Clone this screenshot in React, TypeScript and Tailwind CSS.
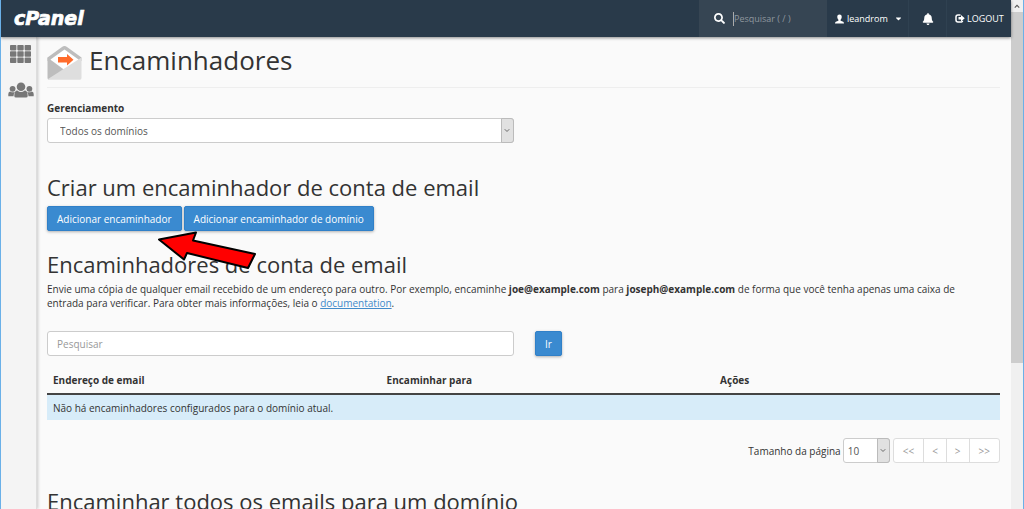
import type { ComponentProps, ReactNode } from "react";
import { FaBell, FaCaretDown, FaSearch } from "react-icons/fa";

function Envelope() {
  return (
    <svg viewBox="0 0 35 35" className="size-[35px] shrink-0" aria-hidden="true">
      <path d="M0.5 12.5 L15 2 Q17.5 -0.2 20 2 L34.5 12.5 V16 H0.5 Z" fill="#bdbdbd" />
      <path d="M3.5 14.5 L17.5 4.5 L31.5 14.5 V24 H3.5 Z" fill="#fff" />
      <path d="M0.5 12.5 L17.5 25 L2 34.5 Q0.5 34.5 0.5 33 Z" fill="#bdbdbd" />
      <path d="M34.5 12.5 L1 34 Q1.5 34.7 3 34.7 H33 Q34.5 34.7 34.5 33 Z" fill="#dedede" />
      <path d="M11 12 H20 V9 L26.5 14.7 L20 20.5 V17.5 H11 Z" fill="#ff6c2c" />
    </svg>
  );
}

function GridIcon() {
  return (
    <svg viewBox="0 0 21 18" className="h-[18px] w-[21px]" fill="#777" aria-hidden="true">
      {[0, 6.3, 12.6].map((y) =>
        [0, 7.3, 14.6].map((x) => <rect key={`${x}-${y}`} x={x} y={y} width="6.4" height="5.4" rx="0.8" />),
      )}
    </svg>
  );
}

function UsersIcon() {
  return (
    <svg viewBox="0 0 26 16" className="h-4 w-[26px]" fill="#777" aria-hidden="true">
      <circle cx="4.6" cy="6.8" r="2.9" />
      <circle cx="21.4" cy="6.8" r="2.9" />
      <path d="M0.3 14.2 V12 Q0.3 9.4 2.3 9.4 Q4.6 11 7 9.8 Q5.6 11.5 5.5 14.2 Z" />
      <path d="M25.7 14.2 V12 Q25.7 9.4 23.7 9.4 Q21.4 11 19 9.8 Q20.4 11.5 20.5 14.2 Z" />
      <circle cx="13" cy="4.7" r="4.3" />
      <path d="M6.3 14 Q6.3 8.5 9.3 8.5 Q13 11.5 16.7 8.5 Q19.7 8.5 19.7 14 Q19.7 15.6 18 15.6 H8 Q6.3 15.6 6.3 14 Z" />
    </svg>
  );
}

function UserIcon() {
  return (
    <svg viewBox="0 0 9 10" className="h-[10px] w-[9px] shrink-0" fill="#fff" aria-hidden="true">
      <path d="M4.5 0.5 C6.2 0.5 6.9 1.7 6.7 3.3 C6.6 4.5 6.1 5.2 5.6 5.8 V6.7 L8.2 7.8 Q9 8.2 9 9.5 H0 Q0 8.2 0.8 7.8 L3.4 6.7 V5.8 C2.9 5.2 2.4 4.5 2.3 3.3 C2.1 1.7 2.8 0.5 4.5 0.5 Z" />
    </svg>
  );
}

function LogoutIcon() {
  return (
    <svg viewBox="0 0 20 18" className="h-[9px] w-[10px] shrink-0" aria-hidden="true">
      <path d="M11 2 H6 Q2 2 2 6 V12 Q2 16 6 16 H11 Q15 16 15 13.5" fill="none" stroke="#fff" strokeWidth="3" />
      <path d="M7 6 H12 V2 L19.5 8.5 L12 15 V11 H7 Z" fill="#fff" />
    </svg>
  );
}

function Logo() {
  return (
    <svg viewBox="0 0 74 20" className="h-5 w-[74px]" role="img" aria-label="cPanel">
      <text
        x="1"
        y="16"
        fill="#fff"
        stroke="#fff"
        strokeWidth="0.7"
        className="font-['DejaVu_Sans',sans-serif] text-[19px] font-bold italic"
      >
        cPanel
      </text>
    </svg>
  );
}

function SelectBox({ className, children, ...rest }: ComponentProps<"select">) {
  return (
    <div className="relative">
      <select
        {...rest}
        className={`block h-[25px] w-full appearance-none rounded-[3px] border border-[#ccc] bg-white text-[#555] ${className}`}
      >
        {children}
      </select>
      <span className="pointer-events-none absolute inset-y-0 right-0 flex w-[13px] items-center justify-center rounded-r-[3px] border border-[#bbb] bg-[#e1e1e1]">
        <svg viewBox="0 0 8 5" className="h-[5px] w-[6px]" fill="none" stroke="#666" strokeWidth="1.3" aria-hidden="true">
          <path d="M1 0.8 L4 3.8 L7 0.8" />
        </svg>
      </span>
    </div>
  );
}

function PrimaryButton({ children }: { children: ReactNode }) {
  return (
    <button
      type="button"
      className="h-[25px] rounded-[2px] border border-[#3080c8] bg-[#3a8ad0] px-[9px] text-white shadow-[0_1px_3px_rgba(0,0,0,0.3)]"
    >
      {children}
    </button>
  );
}

function SectionTitle({ children }: { children: ReactNode }) {
  return <h2 className="text-[22px] leading-[26px] text-[#333]">{children}</h2>;
}

function Header() {
  return (
    <header className="z-10 flex h-[37px] shrink-0 items-stretch bg-[#293a4a] text-[9px] text-white shadow-[0_1px_3px_rgba(0,0,0,0.45)]">
      <a href="#inicio" className="flex items-center pl-3">
        <Logo />
      </a>
      <label className="ml-auto flex w-[128px] items-center gap-2 bg-[#364553] pl-[15px]">
        <FaSearch className="size-[11px] shrink-0" aria-hidden="true" />
        <input
          type="search"
          aria-label="Pesquisar"
          placeholder="Pesquisar ( / )"
          className="h-[14px] w-20 border-l border-[#aaa] bg-transparent outline-none placeholder:text-[#8f979e]"
        />
      </label>
      <button type="button" className="flex w-[82px] items-center border-r border-[#2f4151] pl-2">
        <UserIcon />
        <span className="pl-[3px]">leandrom</span>
        <FaCaretDown className="ml-[6px] size-[9px]" aria-hidden="true" />
      </button>
      <button type="button" aria-label="Notificações" className="flex w-[38px] items-center justify-center border-r border-[#2f4151]">
        <FaBell className="size-3" aria-hidden="true" />
      </button>
      <a href="#logout" className="flex w-16 items-center gap-[2px] pl-2">
        <LogoutIcon />
        LOGOUT
      </a>
    </header>
  );
}

const columns = ["Endereço de email", "Encaminhar para", "Ações"];
const pages = ["<<", "<", ">", ">>"];

export default function App() {
  return (
    <div className="flex h-screen overflow-hidden border-x border-[#6ab0e8] bg-[#fafafa] font-['Open_Sans','Noto_Sans',sans-serif] text-[10px] leading-[14px] text-[#333]">
      <div className="flex min-w-0 flex-1 flex-col">
        <Header />
        <div className="flex min-h-0 flex-1">
          <nav className="flex w-9 shrink-0 flex-col items-center gap-[19px] border-r border-[#ddd] bg-[#f4f4f4] pt-2 pl-1 shadow-[1px_0_3px_rgba(0,0,0,0.2)]">
            <a href="#painel" aria-label="Painel">
              <GridIcon />
            </a>
            <a href="#usuarios" aria-label="Usuários">
              <UsersIcon />
            </a>
          </nav>
          <main className="min-w-0 flex-1 pr-[11px] pl-[10px]">
            <div className="flex h-[51px] items-center gap-[7px] border-b border-[#eee]">
              <Envelope />
              <h1 className="pb-1 text-[26px] leading-8">Encaminhadores</h1>
            </div>

            <div className="mt-[13px] w-[49%]">
              <label htmlFor="dominio" className="mb-[3px] block font-bold">
                Gerenciamento
              </label>
              <SelectBox id="dominio" className="px-3">
                <option>Todos os domínios</option>
              </SelectBox>
            </div>

            <section className="mt-[31px]">
              <SectionTitle>Criar um encaminhador de conta de email</SectionTitle>
              <div className="mt-[6px] flex gap-[2px]">
                <PrimaryButton>Adicionar encaminhador</PrimaryButton>
                <div className="relative">
                  <PrimaryButton>Adicionar encaminhador de domínio</PrimaryButton>
                  <svg
                    viewBox="0 0 100 40"
                    className="pointer-events-none absolute top-[25px] -left-[27px] h-10 w-[100px]"
                    aria-hidden="true"
                  >
                    <path
                      d="M2 8.5 L39 1.5 L36 9.5 L98 23 L91 37 L30 22 L27 28.5 Z"
                      fill="#f00"
                      stroke="#000"
                      strokeWidth="2"
                      strokeLinejoin="round"
                    />
                  </svg>
                </div>
              </div>
            </section>

            <section className="mt-5">
              <SectionTitle>Encaminhadores de conta de email</SectionTitle>
              <p className="mt-[5px] pr-6">
                Envie uma cópia de qualquer email recebido de um endereço para outro. Por exemplo, encaminhe{" "}
                <b>joe@example.com</b> para <b>joseph@example.com</b> de forma que você tenha apenas uma caixa de
                entrada para verificar. Para obter mais informações, leia o{" "}
                <a href="#documentation" className="text-[#428bca] underline">
                  documentation
                </a>
                .
              </p>
              <form className="mt-[21px] flex gap-[21px]" onSubmit={(e) => e.preventDefault()}>
                <input
                  type="text"
                  aria-label="Pesquisar"
                  placeholder="Pesquisar"
                  className="h-[25px] w-[49%] rounded-[3px] border border-[#ccc] bg-white px-[9px] placeholder:text-[#999]"
                />
                <PrimaryButton>Ir</PrimaryButton>
              </form>

              <table className="mt-[11px] w-full table-fixed border-collapse text-left">
                <thead>
                  <tr className="h-[27px] border-b-2 border-[#444]">
                    {columns.map((name) => (
                      <th key={name} className="w-[35%] px-[6px] font-bold last:w-[30%]">
                        {name}
                      </th>
                    ))}
                  </tr>
                </thead>
                <tbody>
                  <tr className="h-[26px] bg-[#d7ecf9]">
                    <td colSpan={3} className="px-[6px]">
                      Não há encaminhadores configurados para o domínio atual.
                    </td>
                  </tr>
                </tbody>
              </table>

              <div className="mt-[18px] flex items-center justify-end">
                <label htmlFor="tamanho" className="mr-[2px]">
                  Tamanho da página
                </label>
                <div className="w-[47px]">
                  <SelectBox id="tamanho" className="px-[4px]">
                    <option>10</option>
                  </SelectBox>
                </div>
                <div className="ml-[3px] flex h-[25px] divide-x divide-[#ddd] rounded-[3px] border border-[#ddd] bg-white">
                  {pages.map((p) => (
                    <button key={p} type="button" className="px-2 text-[#999] first:px-[9px] last:px-[9px]">
                      {p}
                    </button>
                  ))}
                </div>
              </div>
            </section>

            <section className="mt-[25px]">
              <SectionTitle>Encaminhar todos os emails para um domínio</SectionTitle>
            </section>
          </main>
        </div>
      </div>
      <div className="flex w-3 shrink-0 flex-col bg-[#f0f0f0]" aria-hidden="true">
        <div className="flex h-3 shrink-0 items-center justify-center">
          <svg viewBox="0 0 8 5" className="h-[5px] w-[6px]" fill="none" stroke="#555" strokeWidth="1.5">
            <path d="M1 4 L4 1 L7 4" />
          </svg>
        </div>
        <div className="h-[69%] bg-[#cdcdcd]" />
      </div>
    </div>
  );
}
